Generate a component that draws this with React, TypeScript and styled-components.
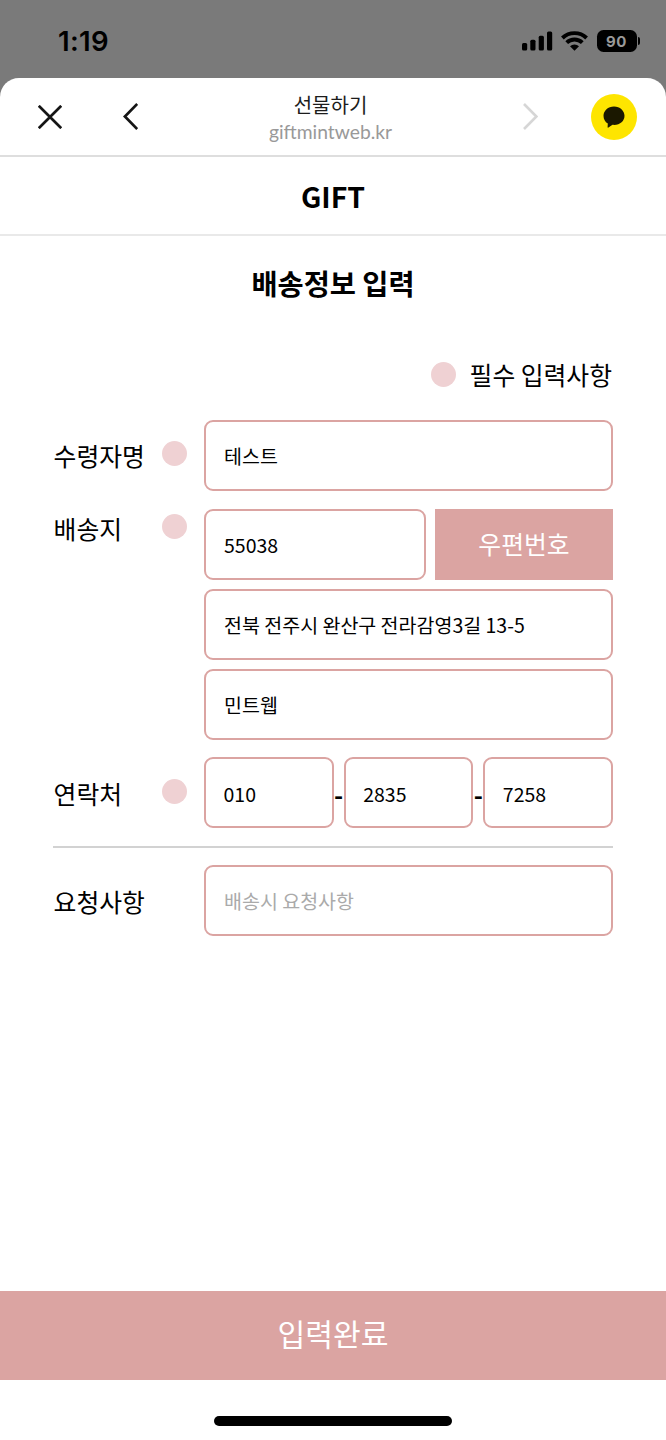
import React from 'react';
import styled, { createGlobalStyle } from 'styled-components';

const GlobalStyle = createGlobalStyle`
  *, *::before, *::after { box-sizing: border-box; }
  body { margin: 0; background: #fff; }
  input, button { font: inherit; margin: 0; }
`;

const ROSE = '#dba4a2';
const BLUSH = '#efd1d3';

const Screen = styled.div`
  width: 666px;
  height: 1440px;
  display: flex;
  flex-direction: column;
  background: #7a7a7a;
  color: #000;
  font-family: 'Noto Sans CJK KR', sans-serif;
  overflow: hidden;
`;

const StatusBar = styled.div`
  height: 78px;
  flex: none;
  display: flex;
  justify-content: space-between;
  padding: 0 26px 0 58px;
`;

const Clock = styled.span`
  font: 600 27.5px/83px Inter, sans-serif;
  letter-spacing: 0.3px;
`;

const StatusIcons = styled.div`
  display: flex;
  align-items: center;
  height: 82px;
`;

const Battery = styled.div`
  width: 40px;
  height: 22px;
  margin-left: 9px;
  border-radius: 6.5px;
  background: #000;
  color: #999;
  font: 700 15px/23px Inter, sans-serif;
  letter-spacing: 0.6px;
  text-align: center;
`;

const BatteryTip = styled.div`
  width: 2.5px;
  height: 8px;
  margin-left: 1px;
  border-radius: 0 3px 3px 0;
  background: #000;
`;

const Sheet = styled.div`
  flex: 1;
  display: flex;
  flex-direction: column;
  background: #fff;
  border-radius: 19px 19px 0 0;
`;

const NavBar = styled.nav`
  height: 79px;
  flex: none;
  display: grid;
  grid-template-columns: 38px 24px 61px 15px 1fr 15px 53px 46px 29px;
  align-items: center;
  border-bottom: 2px solid #dedede;
`;

const NavIcon = styled.svg<{ $col: number }>`
  grid-column: ${(p) => p.$col};
  grid-row: 1;
  display: block;
`;

const NavTitle = styled.div`
  grid-column: 5;
  grid-row: 1;
  display: flex;
  flex-direction: column;
  align-items: center;
  padding-top: 3px;
  white-space: nowrap;
`;

const SiteName = styled.span`
  font-size: 20px;
  line-height: 26px;
  color: #1c1c1c;
`;

const SiteUrl = styled.span`
  font-family: Lato, sans-serif;
  font-size: 19.3px;
  line-height: 27px;
  color: #999;
`;

const Brand = styled.header`
  height: 79px;
  flex: none;
  border-bottom: 2px solid #e9e9e9;
  text-align: center;
  font-size: 28.4px;
  font-weight: 700;
  line-height: 78px;
`;

const Main = styled.main`
  flex: 1;
  display: flex;
  flex-direction: column;
  padding: 0 53px;
`;

const PageTitle = styled.h1`
  margin: 26px 0 0;
  text-align: center;
  font-size: 28.4px;
  font-weight: 700;
  line-height: 42px;
`;

const Dot = styled.span`
  width: 25px;
  height: 25px;
  flex: none;
  border-radius: 50%;
  background: ${BLUSH};
`;

const Legend = styled.div`
  display: flex;
  justify-content: flex-end;
  align-items: center;
  gap: 14px;
  height: 36px;
  margin-top: 52px;
  margin-bottom: 28px;
  padding-right: 1px;
  font-size: 24.8px;
  line-height: 36px;
`;

const Field = styled.div<{ $gap?: number }>`
  display: flex;
  margin-top: ${(p) => p.$gap ?? 0}px;
`;

const Label = styled.div<{ $top: number }>`
  width: 151px;
  flex: none;
  height: 36px;
  display: flex;
  align-items: center;
  justify-content: space-between;
  margin-top: ${(p) => p.$top}px;
  padding: 0 17px 0 0.6px;
  font-size: 24.8px;
  line-height: 36px;
  white-space: nowrap;
  ${Dot} { margin-top: -3px; }
`;

const Stack = styled.div`
  flex: 1;
  min-width: 0;
  display: flex;
  flex-direction: column;
  gap: 9px;
`;

const TextBox = styled.input`
  display: block;
  flex: none;
  min-width: 0;
  width: 100%;
  height: 71px;
  padding: 0 18px 1px;
  border: 2px solid ${ROSE};
  border-radius: 9px;
  outline: none;
  background: #fff;
  color: #000;
  font-size: 19.5px;
  line-height: 28px;
  &::placeholder { color: #aaa; opacity: 1; }
`;

const Line = styled.div<{ $gap?: number }>`
  display: flex;
  align-items: center;
  gap: ${(p) => p.$gap ?? 0}px;
  ${TextBox} { flex: 1; width: 0; }
`;

const PhoneLine = styled(Line)`
  ${TextBox} { padding: 1px 17.5px 0; }
`;

const ZipButton = styled.button`
  width: 178px;
  height: 71px;
  flex: none;
  padding: 0 0 3px;
  border: 0;
  background: ${ROSE};
  color: #fff;
  font-size: 24.8px;
  line-height: 36px;
`;

const Dash = styled.span`
  width: 10px;
  flex: none;
  padding-top: 2px;
  text-align: center;
  font-size: 24.8px;
  font-weight: 700;
  line-height: 36px;
`;

const Divider = styled.hr`
  width: 100%;
  height: 2px;
  margin: 18px 0 17px;
  border: 0;
  background: #d2d2d2;
`;

const SubmitButton = styled.button`
  height: 89px;
  flex: none;
  padding: 0 0 6px;
  border: 0;
  background: ${ROSE};
  color: #fff;
  font-size: 30.2px;
  line-height: 44px;
`;

const HomeArea = styled.footer`
  height: 60px;
  flex: none;
  display: flex;
  justify-content: center;
  padding-top: 36px;
`;

const HomeIndicator = styled.div`
  width: 238px;
  height: 10px;
  border-radius: 5px;
  background: #000;
`;

const WifiIcon = styled.svg`
  margin-left: 8px;
`;

export default function App() {
  return (
    <>
      <GlobalStyle />
      <Screen>
        <StatusBar>
          <Clock>1:19</Clock>
          <StatusIcons>
            <svg width="31" height="20" viewBox="0 0 31 20">
              <rect x="0" y="12" width="5.2" height="7.5" rx="1.5" />
              <rect x="8.3" y="8.7" width="5.2" height="10.8" rx="1.5" />
              <rect x="16.7" y="4.7" width="5.2" height="14.8" rx="1.5" />
              <rect x="25" y="0.4" width="5.2" height="19.1" rx="1.5" />
            </svg>
            <WifiIcon width="27" height="20" viewBox="0 0 27 20">
              <g fill="none" stroke="#000" strokeWidth="3.9">
                <path d="M1.4 7 A17.4 17.4 0 0 1 25.6 7" />
                <path d="M5.7 11.7 A11.2 11.2 0 0 1 21.3 11.7" />
              </g>
              <path d="M13.5 19.8 L9 15.3 A6.4 6.4 0 0 1 18 15.3 Z" />
            </WifiIcon>
            <Battery>90</Battery>
            <BatteryTip />
          </StatusIcons>
        </StatusBar>
        <Sheet>
          <NavBar>
            <NavIcon $col={2} width="24" height="24" viewBox="0 0 24 24">
              <path d="M0.8 0.8 L23.2 23.2 M23.2 0.8 L0.8 23.2" stroke="#151515" strokeWidth="2.7" />
            </NavIcon>
            <NavIcon $col={4} width="15" height="27" viewBox="0 0 15 27">
              <path d="M14.2 1 L1.9 13.5 L14.2 26" fill="none" stroke="#151515" strokeWidth="2.7" />
            </NavIcon>
            <NavTitle>
              <SiteName>선물하기</SiteName>
              <SiteUrl>giftmintweb.kr</SiteUrl>
            </NavTitle>
            <NavIcon $col={6} width="15" height="27" viewBox="0 0 15 27">
              <path d="M1 1 L13.4 13.5 L1 26" fill="none" stroke="#d6d6d6" strokeWidth="2.6" />
            </NavIcon>
            <NavIcon $col={8} width="46" height="46" viewBox="0 0 46 46">
              <circle cx="23" cy="23" r="23" fill="#fee500" />
              <path
                d="M23 12.4 C17 12.4 12.5 16.6 12.5 21.8 C12.5 25.2 14.1 28 16.8 29.6 L16.6 33.2 Q16.7 34 17.4 33.5 L21.5 30.8 C28.6 31.5 33.5 27.4 33.5 21.8 C33.5 16.6 29 12.4 23 12.4 Z"
                fill="#1b1800"
              />
            </NavIcon>
          </NavBar>
          <Brand>GIFT</Brand>
          <Main>
            <PageTitle>배송정보 입력</PageTitle>
            <Legend>
              <Dot />
              필수 입력사항
            </Legend>
            <Field>
              <Label $top={17}>
                수령자명
                <Dot />
              </Label>
              <Stack>
                <TextBox defaultValue="테스트" />
              </Stack>
            </Field>
            <Field $gap={18}>
              <Label $top={1}>
                배송지
                <Dot />
              </Label>
              <Stack>
                <Line $gap={9}>
                  <TextBox defaultValue="55038" />
                  <ZipButton>우편번호</ZipButton>
                </Line>
                <TextBox defaultValue="전북 전주시 완산구 전라감영3길 13-5" />
                <TextBox defaultValue="민트웹" />
              </Stack>
            </Field>
            <Field $gap={17}>
              <Label $top={18}>
                연락처
                <Dot />
              </Label>
              <Stack>
                <PhoneLine>
                  <TextBox defaultValue="010" />
                  <Dash>-</Dash>
                  <TextBox defaultValue="2835" />
                  <Dash>-</Dash>
                  <TextBox defaultValue="7258" />
                </PhoneLine>
              </Stack>
            </Field>
            <Divider />
            <Field>
              <Label $top={18}>요청사항</Label>
              <Stack>
                <TextBox placeholder="배송시 요청사항" />
              </Stack>
            </Field>
          </Main>
          <SubmitButton>입력완료</SubmitButton>
          <HomeArea>
            <HomeIndicator />
          </HomeArea>
        </Sheet>
      </Screen>
    </>
  );
}
